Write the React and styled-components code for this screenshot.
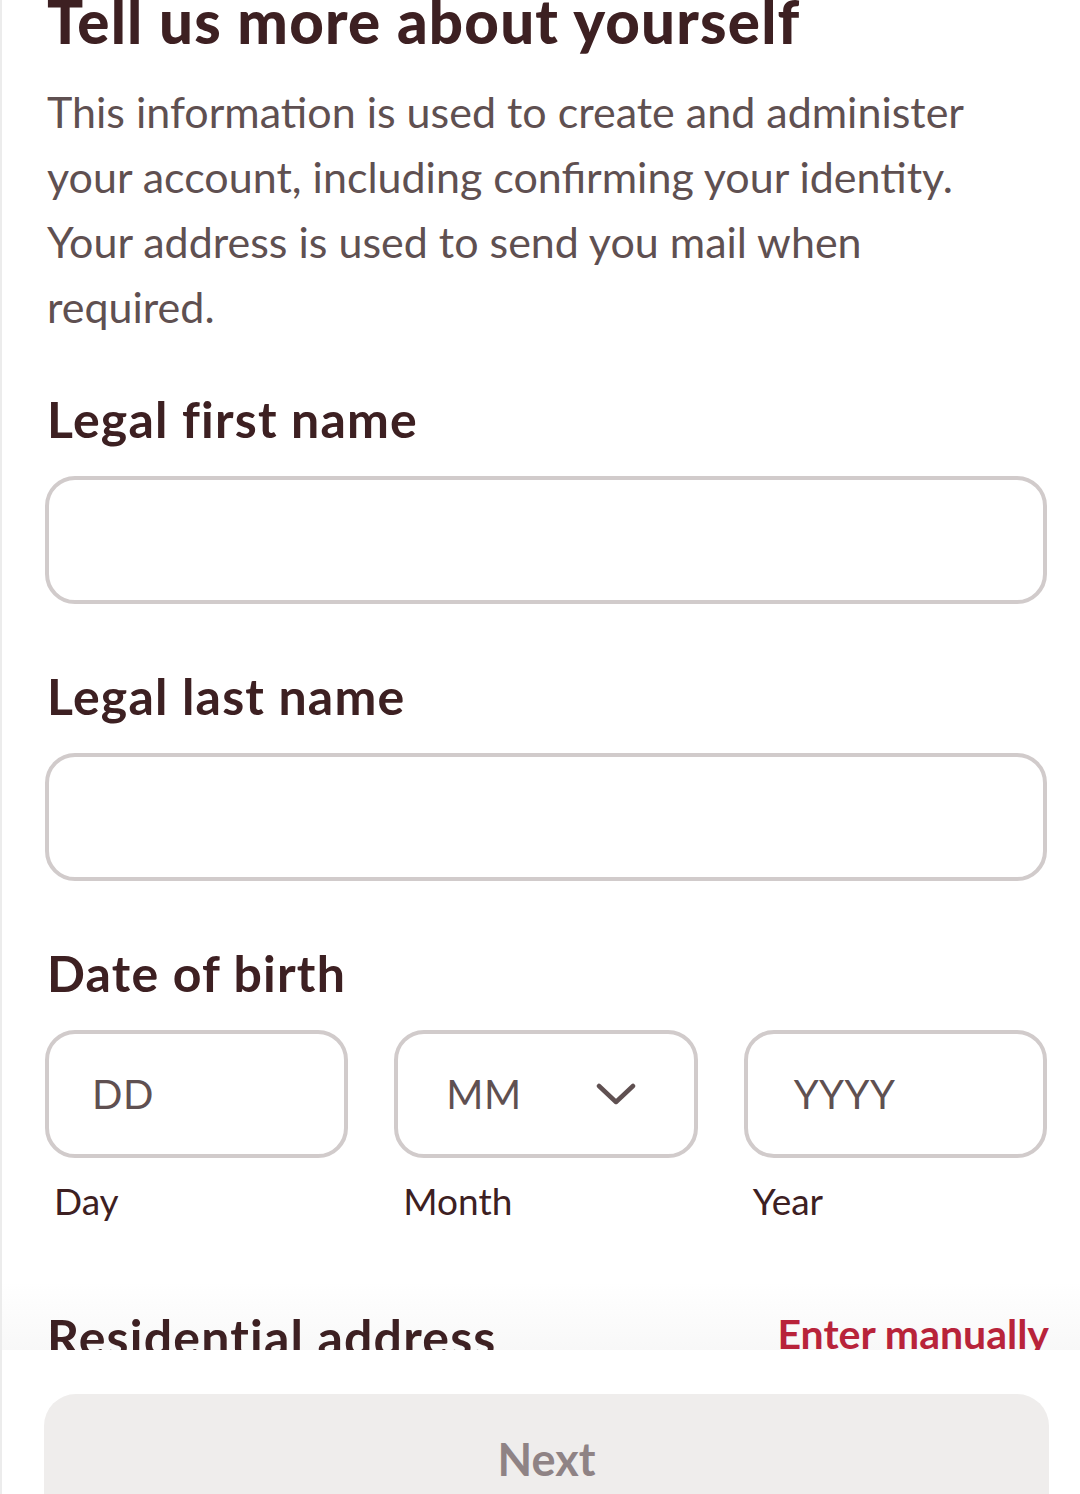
import React from 'react';
import styled, { createGlobalStyle } from 'styled-components';

const COLORS = {
  INK: '#3d2022',
  MUTED: '#5f5051',
  BORDER: '#d1cbcb',
  RED: '#b8233a',
  BUTTON: '#efedec',
  BUTTON_TEXT: '#8f8385',
};

const GlobalStyle = createGlobalStyle`
  html, body {
    margin: 0;
    padding: 0;
    background: #ffffff;
  }
  body {
    font-family: Lato, "Noto Sans", sans-serif;
    color: ${COLORS.INK};
  }
  * {
    box-sizing: border-box;
  }
`;

function Chevron() {
  return (
    <svg width="40" height="24" viewBox="0 0 40 24" fill="none">
      <path
        d="M3 4 L20 20 L37 4"
        stroke={COLORS.MUTED}
        strokeWidth="4.5"
        strokeLinecap="round"
        strokeLinejoin="round"
      />
    </svg>
  );
}

function DateField({ placeholder, caption, inset, select }) {
  return (
    <DateColumn>
      <DateBox inset={inset}>
        <Placeholder>{placeholder}</Placeholder>
        {select && <Chevron />}
      </DateBox>
      <Caption>{caption}</Caption>
    </DateColumn>
  );
}

function App() {
  return (
    <Screen>
      <GlobalStyle />
      <Scroller>
        <Content>
          <Title>Tell us more about yourself</Title>
          <Intro>
            This information is used to create and administer your account,
            including confirming your identity. Your address is used to send
            you mail when required.
          </Intro>

          <Label>Legal first name</Label>
          <TextBox />

          <Label>Legal last name</Label>
          <TextBox />

          <Label>Date of birth</Label>
          <DateRow>
            <DateField placeholder="DD" caption="Day" inset={43} />
            <DateField placeholder="MM" caption="Month" inset={48} select />
            <DateField placeholder="YYYY" caption="Year" inset={46} />
          </DateRow>

          <AddressHeader>
            <Label as="div">Residential address</Label>
            <LinkButton>Enter manually</LinkButton>
          </AddressHeader>
        </Content>
      </Scroller>

      <Footer>
        <NextButton disabled>Next</NextButton>
      </Footer>
    </Screen>
  );
}

const Screen = styled.div`
  height: 1494px;
  display: flex;
  flex-direction: column;
  overflow: hidden;
  border-left: 2px solid #ececec;
  box-shadow: inset -22px 0 22px -22px rgba(0, 0, 0, 0.08);
`;

const Scroller = styled.div`
  flex: 1;
  overflow: hidden;
  background: linear-gradient(to bottom, #ffffff 95%, #f8f8f8 100%);
`;

const Content = styled.div`
  padding: 0 30px 0 45px;
`;

const Title = styled.h1`
  margin: -11px 0 0;
  font-size: 60px;
  line-height: 64px;
  font-weight: 900;
  letter-spacing: 1.2px;
  white-space: nowrap;
  color: ${COLORS.INK};
`;

const Intro = styled.p`
  margin: 26px 0 0;
  font-size: 43px;
  line-height: 65px;
  color: ${COLORS.MUTED};
  max-width: 990px;
`;

const Label = styled.h2`
  margin: 52px 0 0;
  font-size: 50px;
  line-height: 56px;
  font-weight: 700;
  letter-spacing: 1.2px;
  color: ${COLORS.INK};
`;

const TextBox = styled.div`
  margin-top: 29px;
  height: 128px;
  width: 1002px;
  margin-left: -2px;
  border: 4px solid ${COLORS.BORDER};
  border-radius: 30px;
  background: #ffffff;

  & + ${Label} {
    margin-top: 64px;
  }
`;

const DateRow = styled.div`
  margin-top: 29px;
  margin-left: -2px;
  width: 1002px;
  display: grid;
  grid-template-columns: repeat(3, 1fr);
  column-gap: 46px;
`;

const DateColumn = styled.div`
  display: flex;
  flex-direction: column;
`;

const DateBox = styled.div`
  height: 128px;
  border: 4px solid ${COLORS.BORDER};
  border-radius: 30px;
  display: flex;
  align-items: center;
  justify-content: space-between;
  padding: 0 58px 0 ${p => p.inset}px;
`;

const Placeholder = styled.span`
  font-size: 40px;
  color: ${COLORS.MUTED};
  letter-spacing: 0.5px;
`;

const Caption = styled.div`
  margin: 23px 0 0 9px;
  font-size: 37px;
  line-height: 40px;
  color: ${COLORS.INK};
`;

const AddressHeader = styled.div`
  margin-top: 88px;
  display: flex;
  justify-content: space-between;
  align-items: flex-start;
  width: 1002px;

  ${Label} {
    margin: 0;
  }
`;

const LinkButton = styled.button`
  border: none;
  background: none;
  padding: 0;
  font-family: inherit;
  font-size: 41px;
  line-height: 50px;
  font-weight: 700;
  color: ${COLORS.RED};
`;

const Footer = styled.div`
  flex: 0 0 144px;
  background: #ffffff;
  padding: 44px 32px 0 42px;
  overflow: hidden;
`;

const NextButton = styled.button`
  width: 1005px;
  height: 130px;
  border: none;
  border-radius: 32px;
  background: ${COLORS.BUTTON};
  font-family: inherit;
  font-size: 45px;
  font-weight: 700;
  color: ${COLORS.BUTTON_TEXT};
  padding: 0;
`;

export default App;
